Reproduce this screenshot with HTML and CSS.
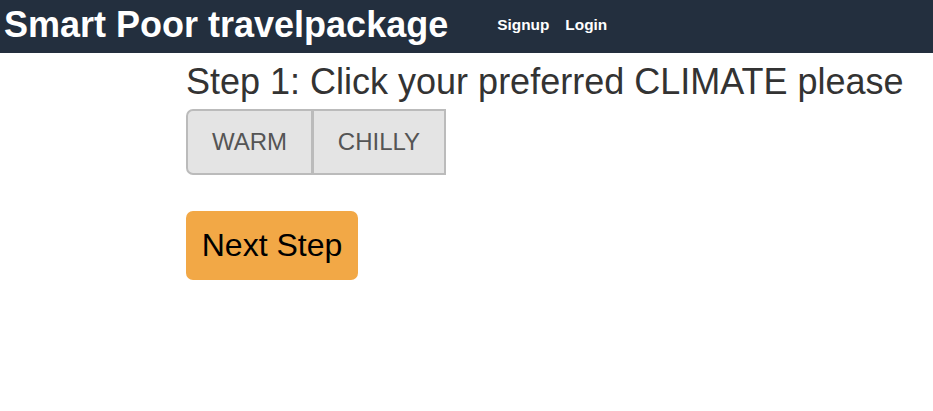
FILE: index.html
```html
<!DOCTYPE html>
<html>
<head>
<meta charset="utf-8">
<link rel="stylesheet" href="styles.css">
</head>
<body>
<nav class="navbar">
  <a class="brand">Smart Poor travelpackage</a>
  <ul class="nav-links">
    <li><a>Signup</a></li>
    <li><a>Login</a></li>
  </ul>
</nav>
<main class="content">
  <h2 class="step-title">Step 1: Click your preferred CLIMATE please</h2>
  <div class="btn-group">
    <button class="choice first">WARM</button>
    <button class="choice last">CHILLY</button>
  </div>
  <button class="next-btn">Next Step</button>
</main>
</body>
</html>
```
FILE: styles.css
```css
* { box-sizing: border-box; }
body {
  margin: 0;
  font-family: "Liberation Sans", Arial, sans-serif;
  background: #fff;
}
.navbar {
  height: 53px;
  background: #232f3e;
  display: flex;
  align-items: center;
  padding-left: 4px;
}
.brand {
  color: #fff;
  font-weight: bold;
  font-size: 36px;
  line-height: 53px;
  margin-top: -4px;
}
.nav-links {
  list-style: none;
  margin: -3px 0 0 49px;
  padding: 0;
  display: flex;
  gap: 16px;
}
.nav-links a {
  color: #fff;
  font-weight: bold;
  font-size: 15.4px;
}
.content {
  padding-left: 186px;
}
.step-title {
  margin: 10px 0 0 0;
  font-size: 36px;
  font-weight: normal;
  color: #333;
  line-height: 38px;
  height: 46px;
}
.btn-group {
  display: flex;
}
.choice {
  font-family: "Liberation Sans", Arial, sans-serif;
  font-size: 24px;
  color: #555;
  background: #e4e4e4;
  border: 2px solid #bbb;
  height: 66px;
  padding: 0;
  margin: 0;
}
.choice.first {
  width: 127px;
  border-radius: 7px 0 0 7px;
}
.choice.last {
  width: 134px;
  border-radius: 0;
  margin-left: -1px;
}
.next-btn {
  display: block;
  margin-top: 36px;
  width: 172px;
  height: 69px;
  background: #f2a846;
  border: none;
  border-radius: 7px;
  font-family: "Liberation Sans", Arial, sans-serif;
  font-size: 32px;
  color: #000;
  padding: 0;
}
```
